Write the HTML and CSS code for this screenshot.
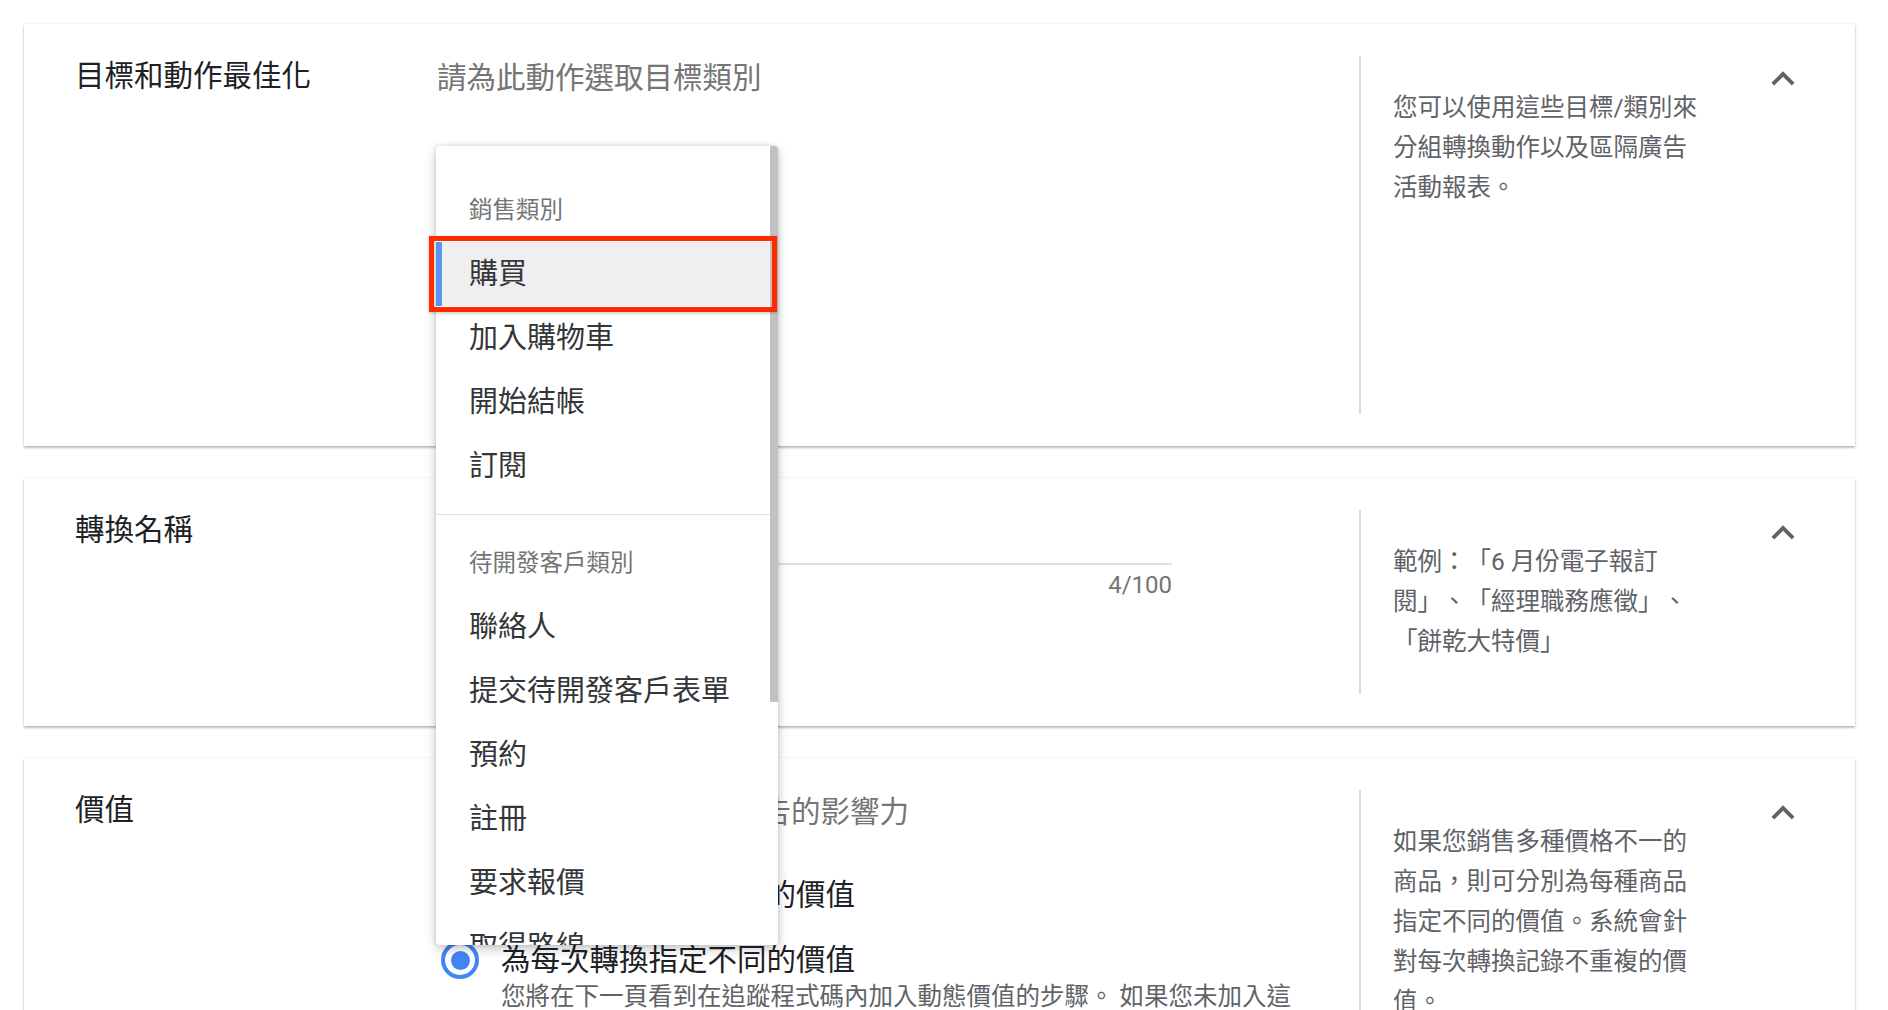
FILE: index.html
```html
<!DOCTYPE html>
<html lang="zh-Hant">
<head>
    <meta charset="utf-8">
    <title>轉換動作</title>
    <link rel="stylesheet" href="styles.css">
</head>
<body>
    <div class="page">

        <!-- 目標和動作最佳化 -->
        <div class="card card-goal">
            <div class="card-title">目標和動作最佳化</div>
            <div class="card-body">
                <div class="subtitle">請為此動作選取目標類別</div>
                <div class="select-field">購買</div>

                <div class="menu">
                    <div class="menu-list">
                        <div class="menu-group">
                            <div class="menu-header">銷售類別</div>
                            <div class="menu-item selected">購買</div>
                            <div class="menu-item">加入購物車</div>
                            <div class="menu-item">開始結帳</div>
                            <div class="menu-item">訂閱</div>
                        </div>
                        <div class="menu-group">
                            <div class="menu-header">待開發客戶類別</div>
                            <div class="menu-item">聯絡人</div>
                            <div class="menu-item">提交待開發客戶表單</div>
                            <div class="menu-item">預約</div>
                            <div class="menu-item">註冊</div>
                            <div class="menu-item">要求報價</div>
                            <div class="menu-item">取得路線</div>
                            <div class="menu-item">外連點擊</div>
                        </div>
                    </div>
                    <div class="menu-track"><div class="menu-thumb"></div></div>
                </div>
            </div>
            <div class="card-help">
                您可以使用這些目標/類別來<br>分組轉換動作以及區隔廣告<br>活動報表。
            </div>
            <div class="card-toggle">
                <svg viewBox="0 0 24 24" width="46" height="46"><path d="M7.41 15.41L12 10.830l4.59 4.58L18 14l-6-6-6 6z"/></svg>
            </div>
        </div>

        <!-- 轉換名稱 -->
        <div class="card card-name">
            <div class="card-title">轉換名稱</div>
            <div class="card-body">
                <div class="field">
                    <div class="field-input">網站購買</div>
                    <div class="field-count">4/100</div>
                </div>
            </div>
            <div class="card-help">
                範例：「6 月份電子報訂<br>閱」、「經理職務應徵」、<br>「餅乾大特價」
            </div>
            <div class="card-toggle">
                <svg viewBox="0 0 24 24" width="46" height="46"><path d="M7.41 15.41L12 10.83l4.59 4.58L18 14l-6-6-6 6z"/></svg>
            </div>
        </div>

        <!-- 價值 -->
        <div class="card card-value">
            <div class="card-title">價值</div>
            <div class="card-body">
                <div class="subtitle">為轉換指定價值，評估廣告的影響力</div>
                <div class="options">
                    <div class="option">
                        <span class="radio"></span>
                        <div class="option-text">
                            <div class="option-label">為每次轉換使用相同的價值</div>
                        </div>
                    </div>
                    <div class="option">
                        <span class="radio checked"></span>
                        <div class="option-text">
                            <div class="option-label">為每次轉換指定不同的價值</div>
                            <div class="option-desc">您將在下一頁看到在追蹤程式碼內加入動態價值的步驟。 如果您未加入這</div>
                        </div>
                    </div>
                    <div class="option">
                        <span class="radio"></span>
                        <div class="option-text">
                            <div class="option-label">不要為這項轉換動作使用價值</div>
                        </div>
                    </div>
                </div>
            </div>
            <div class="card-help">
                如果您銷售多種價格不一的<br>商品，則可分別為每種商品<br>指定不同的價值。系統會針<br>對每次轉換記錄不重複的價<br>值。
            </div>
            <div class="card-toggle">
                <svg viewBox="0 0 24 24" width="46" height="46"><path d="M7.41 15.41L12 10.83l4.59 4.58L18 14l-6-6-6 6z"/></svg>
            </div>
        </div>

    </div>
</body>
</html>
```

FILE: styles.css
```css
html, body {
    margin: 0;
    overflow: hidden;
    background: #ffffff;
}
body {
    font-family: Roboto, "Noto Sans CJK TC", sans-serif;
    color: #202124;
    text-spacing-trim: space-all;
}
.page {
    display: flex;
    flex-direction: column;
    gap: 32px;
    padding: 24px 33px 0 24px;
}

/* cards */
.card {
    position: relative;
    display: grid;
    grid-template-columns: 362px 1fr 401px 46px;
    padding: 32px 49px 32px 51px;
    background: #ffffff;
    box-shadow: 0 2px 2px rgba(0, 0, 0, 0.24), 0 0 2px rgba(0, 0, 0, 0.12);
}
.card-goal {
    height: 358px;
    z-index: 2;
}
.card-name {
    height: 184px;
}
.card-value {
    height: 420px;
}
.card-title {
    font-size: 29.5px;
    line-height: 40px;
    color: #202124;
}
.card-body {
    position: relative;
}
.card-help {
    border-left: 2px solid #dadce0;
    padding: 32px 0 0 32px;
    font-size: 24.5px;
    line-height: 40px;
    color: #5f6368;
    white-space: nowrap;
}
.card-toggle svg {
    display: block;
    fill: #5f6368;
}
.subtitle {
    font-size: 29.5px;
    line-height: 44px;
    color: #757575;
    white-space: nowrap;
}
.select-field {
    margin-top: 40px;
    font-size: 29px;
    line-height: 60px;
    border-bottom: 2px solid #e0e0e0;
    width: 340px;
}

/* dropdown menu */
.menu {
    position: absolute;
    top: 90px;
    left: -1px;
    width: 342px;
    height: 799px;
    display: flex;
    background: #ffffff;
    border-radius: 4px;
    box-shadow: 0 4px 12px rgba(0, 0, 0, 0.22), 0 0 4px rgba(0, 0, 0, 0.12);
}
.menu-list {
    flex: 1;
    padding-top: 16px;
    overflow-x: visible;
    overflow-y: clip;
}
.menu-group {
    padding: 16px 0;
}
.menu-group + .menu-group {
    border-top: 1px solid #e0e0e0;
}
.menu-header {
    height: 64px;
    line-height: 64px;
    padding-left: 33px;
    font-size: 23.5px;
    color: #757575;
}
.menu-item {
    height: 64px;
    line-height: 64px;
    padding-left: 33px;
    font-size: 29px;
    color: #333639;
    white-space: nowrap;
}
.menu-item.selected {
    position: relative;
    background: #efefef;
    box-shadow: inset 6px 0 0 #5b95f0;
}
.menu-item.selected::after {
    content: "";
    position: absolute;
    top: -6px;
    left: -7px;
    right: -7px;
    bottom: -6px;
    border: 5px solid #ff2a00;
    box-shadow: 0 1px 3px rgba(0, 0, 0, 0.25);
}
.menu-track {
    width: 8px;
}
.menu-thumb {
    height: 556px;
    background: #c1c1c1;
    border-top-right-radius: 4px;
}

/* text field */
.field {
    width: 735px;
}
.field-input {
    height: 53px;
    line-height: 50px;
    font-size: 29px;
    border-bottom: 2px solid #e0e0e0;
}
.field-count {
    margin-top: 5px;
    text-align: right;
    font-size: 24px;
    line-height: 30px;
    color: #757575;
}

/* radio options */
.options {
    margin-top: 41px;
    display: flex;
    flex-direction: column;
    gap: 25px;
}
.option {
    display: flex;
    gap: 22px;
    padding-left: 4px;
}
.radio {
    flex: none;
    box-sizing: border-box;
    width: 38px;
    height: 38px;
    margin-top: 1px;
    border: 4px solid #5f6368;
    border-radius: 50%;
    position: relative;
}
.radio.checked {
    border-color: #4285f4;
}
.radio.checked::after {
    content: "";
    position: absolute;
    top: 5.5px;
    left: 5.5px;
    width: 19px;
    height: 19px;
    border-radius: 50%;
    background: #4285f4;
}
.option-label {
    font-size: 29.5px;
    line-height: 40px;
    color: #202124;
}
.option-desc {
    font-size: 24.5px;
    line-height: 34px;
    color: #5f6368;
    white-space: nowrap;
}
```
